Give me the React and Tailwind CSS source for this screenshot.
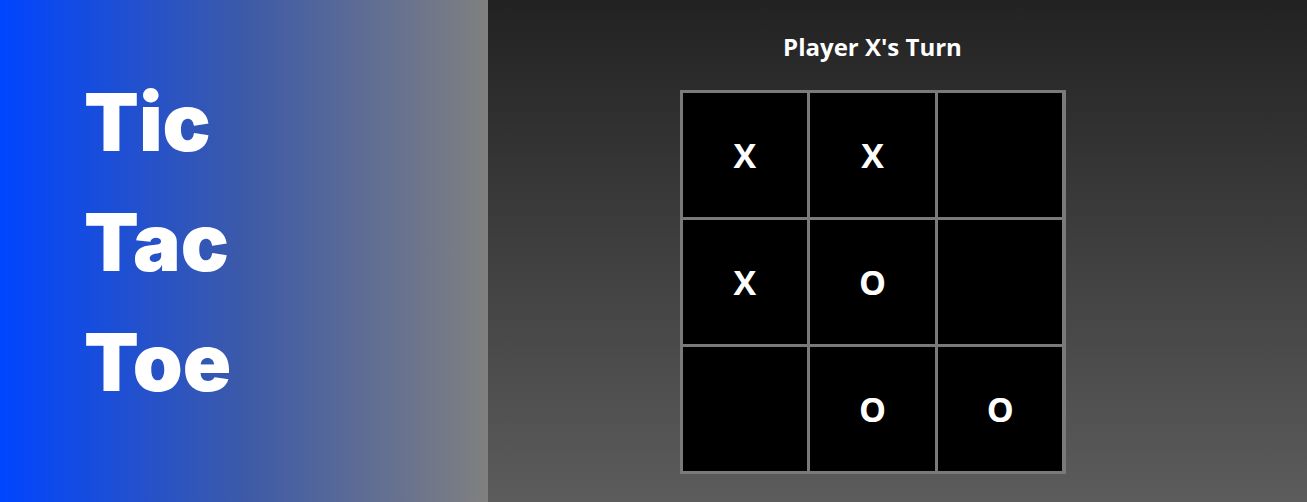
const board = ['X', 'X', '', 'X', 'O', '', '', 'O', 'O'];

export default function App() {
  return (
    <div className="flex h-[502px] w-[1307px] overflow-hidden">
      {/* Left hero */}
      <div className="flex w-[488px] flex-col justify-center bg-[linear-gradient(to_right,#0045ff_0%,#3d5aa8_50%,#808080_100%)] pb-[18px] pl-[84px]">
        <h1
          className="text-[80px] font-black leading-[120px] text-white"
          style={{ fontFamily: 'Inter, "Noto Sans", sans-serif' }}
        >
          Tic
          <br />
          Tac
          <br />
          Toe
        </h1>
      </div>

      {/* Game */}
      <div
        className="flex flex-1 flex-col items-center bg-[linear-gradient(to_bottom,#222222,#5c5c5c)] pr-[50px] pt-[30px]"
        style={{ fontFamily: '"Open Sans", "Noto Sans", sans-serif' }}
      >
        <h2 className="text-[24px] font-bold leading-[34px] text-white">Player X's Turn</h2>
        <div className="mt-[26px] grid w-[386px] grid-cols-3 gap-[3px] bg-[#7a7a7a] p-[3px]">
          {board.map((v, i) => (
            <div key={i} className="flex h-[124px] items-center justify-center bg-black text-[34px] font-bold text-white">
              {v}
            </div>
          ))}
        </div>
      </div>
    </div>
  );
}
